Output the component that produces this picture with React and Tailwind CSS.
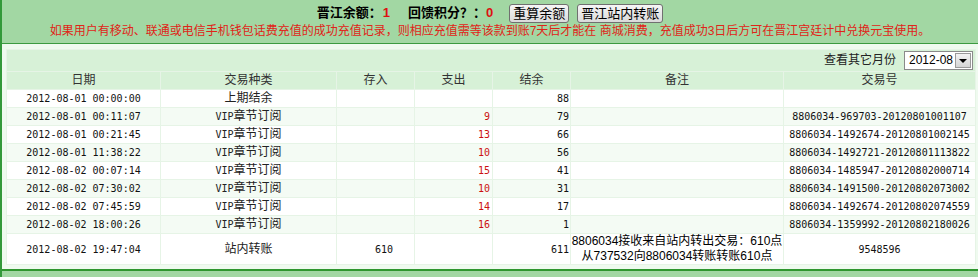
const rows = [
  ['2012-08-01 00:00:00', '上期结余', '', '', '88', '', ''],
  ['2012-08-01 00:11:07', 'VIP', '', '9', '79', '', '8806034-969703-20120801001107'],
  ['2012-08-01 00:21:45', 'VIP', '', '13', '66', '', '8806034-1492674-20120801002145'],
  ['2012-08-01 11:38:22', 'VIP', '', '10', '56', '', '8806034-1492721-20120801113822'],
  ['2012-08-02 00:07:14', 'VIP', '', '15', '41', '', '8806034-1485947-20120802000714'],
  ['2012-08-02 07:30:02', 'VIP', '', '10', '31', '', '8806034-1491500-20120802073002'],
  ['2012-08-02 07:45:59', 'VIP', '', '14', '17', '', '8806034-1492674-20120802074559'],
  ['2012-08-02 18:00:26', 'VIP', '', '16', '1', '', '8806034-1359992-20120802180026'],
]

const cjk = 'font-["Liberation_Sans","Noto_Sans_CJK_SC",sans-serif]'
const monoCls = 'font-["DejaVu_Sans_Mono","Noto_Sans_CJK_SC",monospace] text-[10px]'

const Cell = ({ bg, className = '', children }) => (
  <div className={`${bg} flex items-center overflow-hidden leading-[17px] ${className}`}>{children}</div>
)

const Kind = ({ v }) =>
  v === 'VIP' ? (
    <span className="text-[12px] leading-[17px] text-[#222]">
      <span className={monoCls}>VIP</span>章节订阅
    </span>
  ) : (
    <span className="text-[12px] leading-[17px] text-[#222]">{v}</span>
  )

const btn =
  'h-[19px] px-[3px] text-[13px] font-normal leading-[17px] border border-[#707070] rounded-[3px] bg-gradient-to-b from-[#f6f6f6] to-[#dadada] text-black'

export default function App() {
  return (
    <div className={`w-[978px] h-[277px] overflow-hidden bg-[#effaef] border-l-2 border-[#33993a] ${cjk}`}>
      <div className="h-[44px] bg-[#a2d7a3] border-b border-[#3a9a3f] flex flex-col items-center pt-[3px]">
        <div className="h-[20px] flex items-center text-[13px] leading-[20px] font-bold text-black">
          <span>晋江余额：</span>
          <span className="text-[#dd1111] ml-[1px]">1</span>
          <span className="ml-[18px]">回馈积分？：</span>
          <span className="text-[#dd1111]">0</span>
          <button className={`ml-[16px] ${btn}`}>重算余额</button>
          <button className={`ml-[8px] ${btn}`}>晋江站内转账</button>
        </div>
        <div className="mt-px text-[12px] leading-[14px] text-[#e02418] whitespace-nowrap">
          如果用户有移动、联通或电信手机钱包话费充值的成功充值记录，则相应充值需等该款到账7天后才能在 商城消费，充值成功3日后方可在晋江宫廷计中兑换元宝使用。
        </div>
      </div>

      <div className="ml-[4px] mt-[5px] w-[970px] p-px bg-[#e6f4e6] flex flex-col gap-px">
        <div className="h-[21px] bg-[#d7f1d7] flex items-center justify-end pr-[2px]">
          <span className="text-[12px] leading-[17px] text-[#222] mr-[8px]">查看其它月份</span>
          <div className="w-[69px] h-[19px] bg-white border border-[#8a8a8a] flex items-center">
            <span className="flex-1 pl-[4px] text-[12px] leading-[17px] text-black">2012-08</span>
            <div className="w-[16px] h-[15px] mr-px bg-gradient-to-b from-[#f4f4f4] to-[#d4d4d4] border border-[#9a9a9a] flex items-center justify-center">
              <div className="w-0 h-0 border-l-[4px] border-r-[4px] border-t-[4px] border-l-transparent border-r-transparent border-t-black" />
            </div>
          </div>
        </div>

        <div className="grid grid-cols-[153px_175px_77px_77px_77px_212px_191px] grid-rows-[repeat(9,17px)_30px] gap-px">
          {['日期', '交易种类', '存入', '支出', '结余', '备注', '交易号'].map(h => (
            <div key={h} className="bg-[#d7f1d7] flex items-center justify-center text-[12px] leading-[17px] text-[#333]">
              {h}
            </div>
          ))}

          {rows.map((r, i) => {
            const bg = i % 2 === 0 ? 'bg-white' : 'bg-[#f4fbf4]'
            return [
              <Cell key={`${i}a`} bg={bg} className={`justify-center text-[#111] ${monoCls}`}>{r[0]}</Cell>,
              <Cell key={`${i}b`} bg={bg} className="justify-center"><Kind v={r[1]} /></Cell>,
              <Cell key={`${i}c`} bg={bg} className={`justify-end pr-[21px] text-[#111] ${monoCls}`}>{r[2]}</Cell>,
              <Cell key={`${i}d`} bg={bg} className={`justify-end pr-[2px] text-[#cc1111] ${monoCls}`}>{r[3]}</Cell>,
              <Cell key={`${i}e`} bg={bg} className={`justify-end pr-px text-[#111] ${monoCls}`}>{r[4]}</Cell>,
              <Cell key={`${i}f`} bg={bg} className="justify-center">{r[5]}</Cell>,
              <Cell key={`${i}g`} bg={bg} className={`justify-center text-[#111] ${monoCls}`}>{r[6]}</Cell>,
            ]
          })}

          <Cell bg="bg-white" className={`justify-center text-[#111] ${monoCls}`}>2012-08-02 19:47:04</Cell>
          <Cell bg="bg-white" className="justify-center"><Kind v="站内转账" /></Cell>
          <Cell bg="bg-white" className={`justify-end pr-[21px] text-[#111] ${monoCls}`}>610</Cell>
          <Cell bg="bg-white" />
          <Cell bg="bg-white" className={`justify-end pr-px text-[#111] ${monoCls}`}>611</Cell>
          <Cell bg="bg-white" className="justify-center">
            <div className="text-center text-[12px] leading-[15px] text-black">
              <div>8806034接收来自站内转出交易：610点</div>
              <div>从737532向8806034转账转账610点</div>
            </div>
          </Cell>
          <Cell bg="bg-white" className={`justify-center text-[#111] ${monoCls}`}>9548596</Cell>
        </div>
      </div>

      <div className="mt-[4px] h-[20px] border-t-2 border-[#2f962f] bg-[#a2d7a3]" />
    </div>
  )
}
